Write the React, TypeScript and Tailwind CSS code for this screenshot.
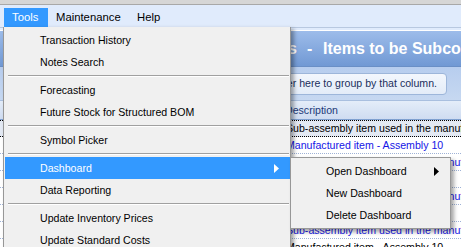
// Rows of the grid behind the menu
const rows = [
  { text: "Sub-assembly item used in the manufacture of Assembly 10", selected: true, color: "text-black" },
  { text: "Manufactured item - Assembly 10", selected: false, color: "text-[#1515e6]" },
  { text: "Sub-assembly item used in the manufacture of Assembly 10", selected: false, color: "text-[#1515e6]" },
  { text: "Manufactured item - Assembly 10", selected: false, color: "text-[#1515e6]" },
  { text: "Sub-assembly item used in the manufacture of Assembly 10", selected: false, color: "text-[#1515e6]" },
  { text: "Manufactured item - Assembly 10", selected: false, color: "text-[#1515e6]" },
  { text: "Sub-assembly item used in the manufacture of Assembly 10", selected: false, color: "text-[#1515e6]" },
  { text: "Manufactured item - Assembly 10", selected: false, color: "text-black" },
];

type MenuEntry = { label: string; sub?: boolean; active?: boolean } | "sep";

const toolsMenu: MenuEntry[] = [
  { label: "Transaction History" },
  { label: "Notes Search" },
  "sep",
  { label: "Forecasting" },
  { label: "Future Stock for Structured BOM" },
  "sep",
  { label: "Symbol Picker" },
  "sep",
  { label: "Dashboard", sub: true, active: true },
  { label: "Data Reporting" },
  "sep",
  { label: "Update Inventory Prices" },
  { label: "Update Standard Costs" },
];

const Separator = () => (
  <div className="h-[6px] pl-[4px] pr-[1px] pt-[2px]">
    <div className="h-px bg-[#a0a0a0]" />
    <div className="h-px bg-white" />
  </div>
);

const App = () => {
  return (
    <div className="relative w-[461px] h-[247px] overflow-hidden bg-white font-['Liberation_Sans',Arial,sans-serif] text-[10.6px] text-black">
      {/* window top strip */}
      <div className="h-[5px] bg-[#d6d6d6] border-b border-[#a8a8a8]" />

      {/* menu bar */}
      <div className="h-[22px] bg-[#e0ebfc] flex items-end pl-[4px] text-[11.3px]">
        <div className="w-[44px] h-[19px] bg-[#3399ff] text-white flex items-center pl-[8px]">Tools</div>
        <div className="w-[81px] h-[19px] flex items-center pl-[8px]">Maintenance</div>
        <div className="h-[19px] flex items-center pl-[8px]">Help</div>
      </div>

      {/* window content */}
      <div className="flex flex-col">
        <div className="h-[3px] bg-[#e0ebfc] border-t border-[#b8c8e0]" />
        <div className="h-px bg-white" />
        <div className="h-[36px] bg-gradient-to-b from-[#9dbcea] to-[#7199d4] flex items-center text-white font-bold text-[16px] whitespace-nowrap border-b border-[#6a8fc6]">
          <div className="w-[297px] shrink-0 text-right overflow-hidden">Subcontract Orders</div>
          <div className="pl-[10px] w-[26px] shrink-0">-</div>
          <div>Items to be Subcontracted</div>
        </div>
        <div className="h-[33px] bg-gradient-to-b from-[#b7cdee] to-[#c6d8f1] flex items-center justify-end pr-[14px]">
          <div className="h-[22px] rounded-[4px] border border-[#9db6da] bg-gradient-to-b from-[#f3f7fd] to-[#e3ecf8] text-[#1b2f5c] flex items-center px-[9px] whitespace-nowrap">
            Drag a column header here to group by that column.
          </div>
        </div>
        <div className="h-[20px] pt-[2px] bg-gradient-to-b from-[#e4edf9] to-[#cfdcf1] border-t border-[#a9bfdf] border-b border-b-[#7fa0d0] flex items-center whitespace-nowrap text-[#1c3a78]">
          <div className="w-[285px] shrink-0" />
          <div>Description</div>
        </div>
        {rows.map((r, i) => (
          <div
            key={i}
            className={`h-[17px] pt-[1px] flex items-center whitespace-nowrap border-b border-dotted ${
              r.selected ? "bg-[#e3e9f3] border-t border-black border-b-black" : "border-b-[#9fb2d6]"
            }`}
          >
            <div className="w-[286px] shrink-0" />
            <div className={r.color}>{r.text}</div>
          </div>
        ))}
      </div>

      {/* Tools dropdown */}
      <div className="absolute left-[3px] top-[27px] w-[288px] h-[230px] bg-[#f0f0f0] border-x border-[#979797] pt-[2px] shadow-[3px_2px_4px_rgba(0,0,0,0.35)]">
        {toolsMenu.map((m, i) =>
          m === "sep" ? (
            <Separator key={i} />
          ) : (
            <div
              key={i}
              className={`h-[22px] pt-[1px] flex items-center pl-[35px] pr-[10px] ml-[1px] ${
                m.active ? "bg-[#3399ff] text-white" : ""
              }`}
            >
              <span className="flex-1">{m.label}</span>
              {m.sub && (
                <svg width="5" height="9" viewBox="0 0 5 9" className="mr-[1px]">
                  <path d="M0 0 L5 4.5 L0 9 Z" fill="white" />
                </svg>
              )}
            </div>
          )
        )}
      </div>

      {/* Dashboard submenu */}
      <div className="absolute left-[290px] top-[157px] w-[161px] bg-[#f0f0f0] border border-[#979797] py-[2px] shadow-[3px_3px_4px_rgba(0,0,0,0.35)]">
        {["Open Dashboard", "New Dashboard", "Delete Dashboard"].map((label, i) => (
          <div key={label} className="h-[22px] pt-[1px] flex items-center pl-[35px] pr-[11px]">
            <span className="flex-1">{label}</span>
            {i === 0 && (
              <svg width="5" height="9" viewBox="0 0 5 9">
                <path d="M0 0 L5 4.5 L0 9 Z" fill="black" />
              </svg>
            )}
          </div>
        ))}
      </div>
    </div>
  );
};

export default App;
